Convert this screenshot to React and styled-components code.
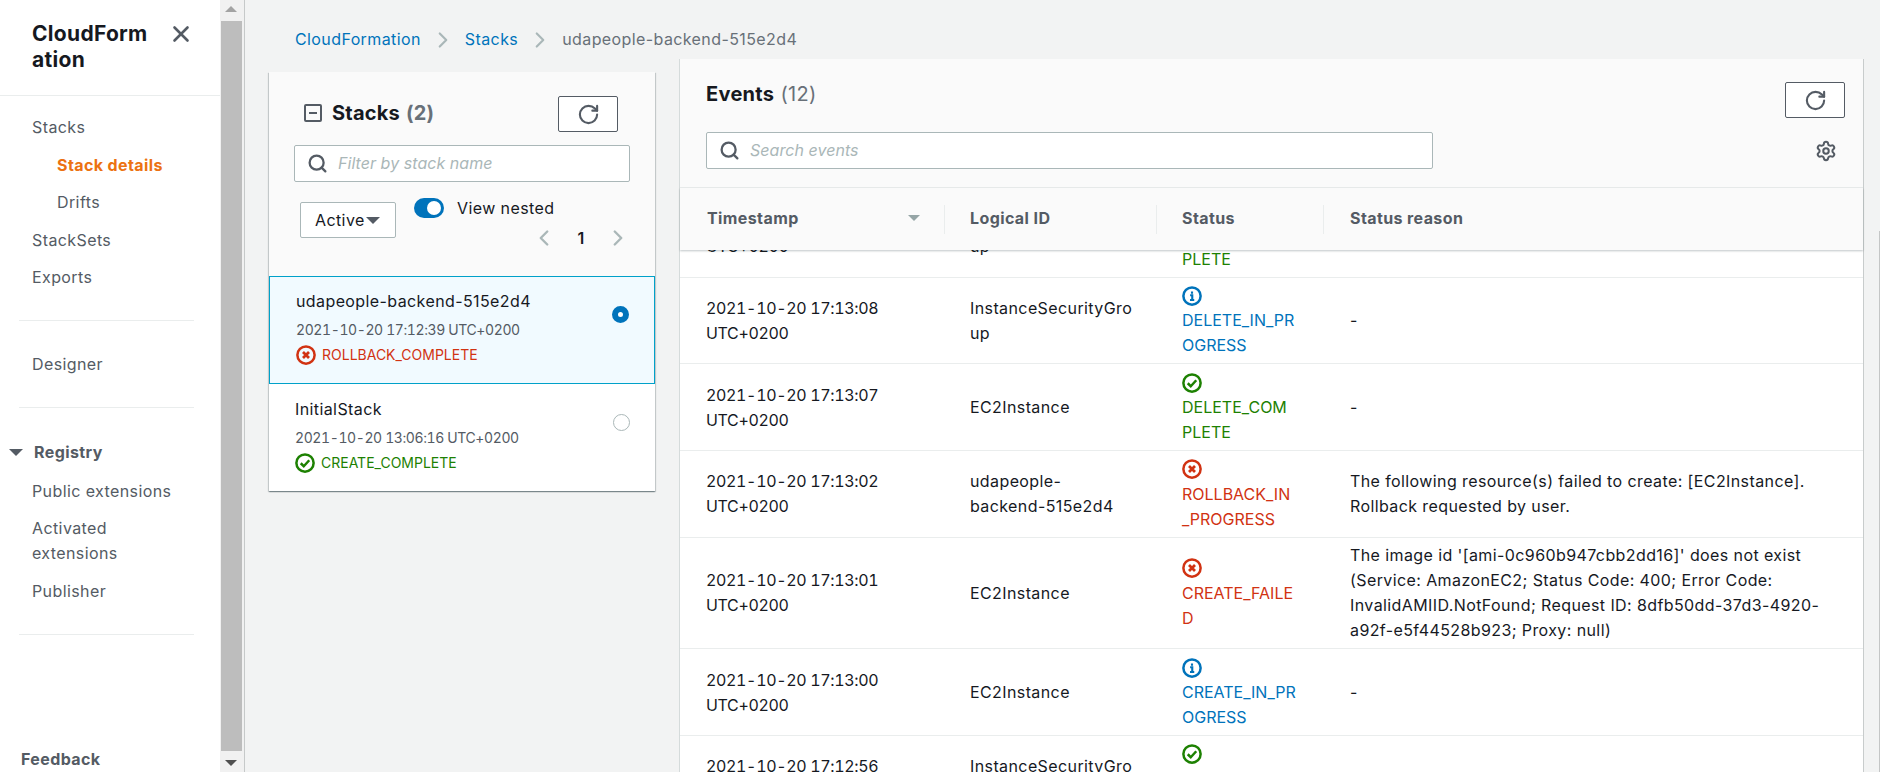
import React from 'react';
import styled, { createGlobalStyle } from 'styled-components';
import { RotateCw, Search, Settings, X, ChevronRight, ChevronLeft } from 'lucide-react';

const GlobalStyle = createGlobalStyle`
  html, body { margin: 0; padding: 0; height: 100%; overflow: hidden; }
  body {
    font-family: Inter, "Liberation Sans", sans-serif;
    font-size: 16px;
    line-height: 25px;
    letter-spacing: 0.4px;
    color: #16191f;
  }
  * { box-sizing: border-box; }
`;

const Page = styled.div`
  position: relative;
  display: flex;
  width: 1880px;
  height: 772px;
  overflow: hidden;
  background: #f2f3f3;
  /* edge of the page's own scroll area, sticks out at the far right */
  &::after {
    content: '';
    position: absolute;
    top: 231px;
    right: 0;
    bottom: 0;
    width: 1px;
    background: #c4c6c6;
  }
`;

/* ---------- side navigation ---------- */
const Sidebar = styled.nav`
  width: 220px;
  flex: none;
  background: #fff;
  display: flex;
  flex-direction: column;
  color: #545b64;
`;

const SideHeader = styled.div`
  display: flex;
  justify-content: space-between;
  padding: 21px 26px 23px 32px;
  border-bottom: 1px solid #eaeded;
`;

const SideTitle = styled.div`
  width: 122px;
  font-size: 21px;
  line-height: 25.5px;
  font-weight: 700;
  letter-spacing: 0.3px;
  color: #16191f;
`;

const CloseBtn = styled.span`
  display: flex;
  height: 25px;
  align-items: center;
  color: #545b64;
`;

const NavGroup = styled.div`
  display: flex;
  flex-direction: column;
  gap: 12.5px;
  padding: ${(p) => p.$pad || '30px 0'};
`;

const NavItem = styled.div`
  padding-left: ${(p) => (p.$sub ? '57px' : '32px')};
  font-weight: ${(p) => (p.$active ? 700 : 400)};
  color: ${(p) => (p.$active ? '#ec7211' : '#545b64')};
`;

const Divider = styled.div`
  height: 1px;
  margin: 0 26px 0 19px;
  background: #eaeded;
`;

const RegistryHead = styled.div`
  display: flex;
  align-items: center;
  gap: 11px;
  padding-left: 9px;
  font-weight: 700;
  margin-bottom: 1.5px;
`;

const Caret = styled.span`
  width: 0;
  height: 0;
  border-left: ${(p) => p.$size || 6}px solid transparent;
  border-right: ${(p) => p.$size || 6}px solid transparent;
  border-top: ${(p) => (p.$size || 6) * 1.1}px solid ${(p) => p.$color || '#545b64'};
`;

const Feedback = styled.div`
  margin-top: auto;
  padding: 0 0 0.5px 21px;
  font-weight: 700;
`;

/* ---------- fake browser scrollbar of the nav ---------- */
const ScrollTrack = styled.div`
  width: 24px;
  flex: none;
  display: flex;
  flex-direction: column;
  align-items: center;
  background: #f1f1f1;
  padding-right: 2px;
`;

const ArrowUp = styled.div`
  width: 0;
  height: 0;
  flex: none;
  margin: 6px 0 9px;
  border-left: 6px solid transparent;
  border-right: 6px solid transparent;
  border-bottom: 6px solid #a3a3a3;
`;

const ArrowDown = styled.div`
  width: 0;
  height: 0;
  flex: none;
  margin: 9px 0 6px;
  border-left: 6px solid transparent;
  border-right: 6px solid transparent;
  border-top: 6px solid #505050;
`;

const ScrollThumb = styled.div`
  flex: 1;
  width: 21px;
  background: #bdbdbd;
`;

/* ---------- main ---------- */
const Main = styled.main`
  flex: 1;
  min-width: 0;
  height: 772px;
  border-left: 1px solid #c6c9c9;
  padding: 27px 17px 0 24px;
  display: flex;
  flex-direction: column;
`;

const Breadcrumbs = styled.div`
  display: flex;
  align-items: center;
  height: 25px;
  padding-left: 26px;
  gap: 9px;
`;

const Crumb = styled.span`
  color: ${(p) => (p.$current ? '#687078' : '#0073bb')};
`;

const Columns = styled.div`
  flex: 1;
  min-height: 0;
  display: flex;
  align-items: flex-start;
  gap: 25px;
  margin-top: 7px;
`;

const cardShadow = '0 1px 1px 0 rgba(0,28,36,.3), 1px 1px 1px 0 rgba(0,28,36,.15), -1px 1px 1px 0 rgba(0,28,36,.15)';

const StacksCard = styled.section`
  width: 386px;
  flex: none;
  margin-top: 13px;
  background: #fff;
  box-shadow: ${cardShadow};
`;

const StacksHead = styled.div`
  background: #fafafa;
  height: 204px;
  padding: 24px 25px 0;
`;

const TitleRow = styled.div`
  display: flex;
  align-items: flex-start;
  justify-content: space-between;
  padding: 0 12px 0 10px;
`;

const StacksTitle = styled.h2`
  margin: 2px 0 0;
  display: flex;
  align-items: center;
  gap: 10px;
  font-size: 20px;
  line-height: 30px;
  font-weight: 700;
  letter-spacing: 0.2px;
`;

const Count = styled.span`
  color: #687078;
  font-weight: ${(p) => p.$weight || 700};
  margin-left: ${(p) => (p.$tight ? '1px' : '-4px')};
`;

const IconButton = styled.button`
  width: 60px;
  height: 36px;
  padding: 0;
  flex: none;
  display: flex;
  align-items: center;
  justify-content: center;
  background: #fff;
  border: 1px solid #545b64;
  border-radius: 2px;
  color: #545b64;
`;

const SearchBox = styled.div`
  display: flex;
  align-items: center;
  gap: 10px;
  height: 37px;
  width: ${(p) => p.$width || 336}px;
  padding-left: 12px;
  background: #fff;
  border: 1px solid #aab7b8;
  border-radius: 2px;
  color: #545b64;
`;

const Placeholder = styled.span`
  font-style: italic;
  letter-spacing: 0.05px;
  color: #aab7b8;
`;

const FilterRow = styled.div`
  margin-top: 13px;
`;

const ControlRow = styled.div`
  display: flex;
  align-items: flex-start;
  margin-top: 16px;
  padding-left: 6px;
`;

const ActiveSelect = styled.div`
  width: 96px;
  height: 36px;
  margin-top: 4px;
  display: flex;
  align-items: center;
  gap: 1px;
  padding-left: 14px;
  background: #fff;
  border: 1px solid #aab7b8;
  border-radius: 2px;
`;

const NestedColumn = styled.div`
  flex: 1;
  padding-left: 18px;
  display: flex;
  flex-direction: column;
`;

const ToggleRow = styled.div`
  display: flex;
  align-items: center;
  gap: 13px;
  height: 20px;
  margin-bottom: 7px;
`;

const Toggle = styled.span`
  position: relative;
  width: 30px;
  height: 20px;
  border-radius: 10px;
  background: #0073bb;
  &::after {
    content: '';
    position: absolute;
    top: 3px;
    right: 3px;
    width: 14px;
    height: 14px;
    border-radius: 50%;
    background: #fff;
  }
`;

const Pager = styled.div`
  display: flex;
  align-items: center;
  justify-content: flex-end;
  gap: 18px;
  margin-right: -1px;
  font-weight: 600;
  color: #aab7b8;
`;

const PageNum = styled.span`
  color: #16191f;
  width: 12px;
  text-align: center;
`;

const StackRow = styled.div`
  position: relative;
  height: ${(p) => (p.$selected ? 108 : 107)}px;
  padding: ${(p) => (p.$selected ? '12px 0 0 26px' : '12px 0 0 25px')};
  background: ${(p) => (p.$selected ? '#f1faff' : '#fff')};
  border: 1px solid ${(p) => (p.$selected ? '#00a1c9' : 'transparent')};
`;

const StackName = styled.div`
  line-height: 25px;
`;

const StackDate = styled.div`
  font-size: 14px;
  line-height: 25px;
  font-variant-numeric: tabular-nums;
  letter-spacing: -0.4px;
  color: #545b64;
  margin-top: 3px;
`;

const StackStatus = styled.div`
  display: flex;
  align-items: center;
  gap: 6px;
  font-size: 14px;
  line-height: 25px;
  letter-spacing: 0;
  color: ${(p) => p.$color};
`;

const Radio = styled.span`
  position: absolute;
  top: 29px;
  right: ${(p) => (p.$on ? 25 : 24)}px;
  width: 17px;
  height: 17px;
  border-radius: 50%;
  background: #fff;
  border: ${(p) => (p.$on ? '6px solid #0073bb' : '1.5px solid #aab7b8')};
`;

const EventsCard = styled.section`
  flex: 1;
  min-width: 0;
  height: 713px;
  display: flex;
  flex-direction: column;
  background: #fff;
  box-shadow: -1px 0 0 #d5dbdb, 1px 0 0 #c8cccc;
`;

const EventsHead = styled.div`
  height: 129px;
  flex: none;
  background: #fafafa;
  padding: 23px 18px 0 26px;
  border-bottom: 1px solid #eaeded;
  position: relative;
`;

const EventsTitle = styled.h2`
  margin: 0;
  height: 50px;
  font-size: 20px;
  line-height: 24px;
  font-weight: 700;
  letter-spacing: 0.3px;
`;

const EventsTools = styled.div`
  display: flex;
  justify-content: space-between;
  align-items: flex-start;
`;

const ToolsRight = styled.div`
  position: absolute;
  top: 23px;
  right: 18px;
  display: flex;
  flex-direction: column;
  align-items: flex-end;
  gap: 22px;
  color: #545b64;
`;

const GearWrap = styled.span`
  display: flex;
  margin-right: 8px;
`;

const eventCols = '265px 212px 167px 1fr';

const ColumnHead = styled.div`
  display: grid;
  grid-template-columns: ${eventCols};
  height: 62px;
  flex: none;
  align-items: center;
  background: #fafafa;
  box-shadow: 0 1px 2px rgba(0,28,36,.25);
  position: relative;
  z-index: 1;
`;

const HeadCell = styled.div`
  height: 29px;
  display: flex;
  align-items: center;
  justify-content: space-between;
  padding: 0 24px 2px ${(p) => p.$pad || 25}px;
  border-right: ${(p) => (p.$last ? 'none' : '1px solid #eaeded')};
  font-weight: 700;
  color: #545b64;
`;

const EventsBody = styled.div`
  flex: 1;
  min-height: 0;
  overflow: hidden;
`;

const EventsList = styled.div`
  margin-top: -59px;
`;

const EventRow = styled.div`
  display: grid;
  grid-template-columns: ${eventCols};
  align-items: center;
  padding: 5.83px 0 4.83px;
  border-bottom: 1px solid #eaeded;
`;

const Cell = styled.div`
  padding-left: ${(p) => p.$pad || 25}px;
  padding-right: ${(p) => p.$right || 20}px;
  overflow-wrap: anywhere;
  white-space: pre-line;
`;

const TimeCell = styled(Cell)`
  font-variant-numeric: tabular-nums;
  letter-spacing: -0.35px;
`;

const StatusCell = styled.div`
  padding-left: 25px;
  letter-spacing: 0;
  color: ${(p) => p.$color};
  white-space: pre-line;
`;

const StatusIconLine = styled.div`
  height: 25px;
  display: flex;
  align-items: center;
`;

const RED = '#d13212';
const GREEN = '#1d8102';
const BLUE = '#0073bb';

// status glyphs, same ring with a different mark in it
const StatusIcon = ({ kind, size = 20 }) => {
  const color = kind === 'error' ? RED : kind === 'success' ? GREEN : BLUE;
  return (
    <svg width={size} height={size} viewBox="0 0 16 16" fill="none" style={{ flex: 'none' }}>
      <circle cx="8" cy="8" r="6.9" stroke={color} strokeWidth="2" />
      {kind === 'error' && <path d="M5.6 5.6l4.8 4.8M10.4 5.6l-4.8 4.8" stroke={color} strokeWidth="2.2" />}
      {kind === 'success' && <path d="M4.6 8.2l2.4 2.4 4.4-4.8" stroke={color} strokeWidth="2" />}
      {kind === 'info' && <path d="M6.5 7.4H8.2V11M6.4 11.2h3.4M8 4.3v1.9" stroke={color} strokeWidth="1.7" />}
    </svg>
  );
};

const MinusSquare = () => (
  <svg width="18" height="18" viewBox="0 0 18 18" fill="none">
    <rect x="1" y="1" width="16" height="16" rx="1" stroke="#545b64" strokeWidth="2" />
    <path d="M5 9h8" stroke="#545b64" strokeWidth="2" />
  </svg>
);

const statusColor = { error: RED, success: GREEN, info: BLUE };

const events = [
  { time: '2021-10-20 17:13:09 UTC+0200', id: 'InstanceSecurityGro\nup', kind: 'success', status: 'DELETE_COM\nPLETE', reason: '' },
  { time: '2021-10-20 17:13:08 UTC+0200', id: 'InstanceSecurityGro\nup', kind: 'info', status: 'DELETE_IN_PR\nOGRESS', reason: '-' },
  { time: '2021-10-20 17:13:07 UTC+0200', id: 'EC2Instance', kind: 'success', status: 'DELETE_COM\nPLETE', reason: '-' },
  { time: '2021-10-20 17:13:02 UTC+0200', id: 'udapeople-\nbackend-515e2d4', kind: 'error', status: 'ROLLBACK_IN\n_PROGRESS', reason: 'The following resource(s) failed to create: [EC2Instance]. Rollback requested by user.' },
  { time: '2021-10-20 17:13:01 UTC+0200', id: 'EC2Instance', kind: 'error', status: 'CREATE_FAILE\nD', reason: "The image id '[ami-0c960b947cbb2dd16]' does not exist (Service: AmazonEC2; Status Code: 400; Error Code: InvalidAMIID.NotFound; Request ID: 8dfb50dd-37d3-4920-a92f-e5f44528b923; Proxy: null)" },
  { time: '2021-10-20 17:13:00 UTC+0200', id: 'EC2Instance', kind: 'info', status: 'CREATE_IN_PR\nOGRESS', reason: '-' },
  { time: '2021-10-20 17:12:56 UTC+0200', id: 'InstanceSecurityGro\nup', kind: 'success', status: 'DELETE_COM\nPLETE', reason: '-' },
];

const App = () => {
  return (
    <Page>
      <GlobalStyle />
      <Sidebar>
        <SideHeader>
          <SideTitle>CloudForm<br />ation</SideTitle>
          <CloseBtn><X size={26} strokeWidth={2.4} /></CloseBtn>
        </SideHeader>
        <NavGroup $pad="19px 0 30px">
          <NavItem>Stacks</NavItem>
          <NavItem $sub $active>Stack details</NavItem>
          <NavItem $sub>Drifts</NavItem>
          <NavItem>StackSets</NavItem>
          <NavItem>Exports</NavItem>
        </NavGroup>
        <Divider />
        <NavGroup $pad="30.5px 0">
          <NavItem>Designer</NavItem>
        </NavGroup>
        <Divider />
        <NavGroup $pad="31.5px 0 30px">
          <RegistryHead><Caret $size={7} />Registry</RegistryHead>
          <NavItem>Public extensions</NavItem>
          <NavItem>Activated<br />extensions</NavItem>
          <NavItem>Publisher</NavItem>
        </NavGroup>
        <Divider />
        <Feedback>Feedback</Feedback>
      </Sidebar>

      <ScrollTrack>
        <ArrowUp />
        <ScrollThumb />
        <ArrowDown />
      </ScrollTrack>

      <Main>
        <Breadcrumbs>
          <Crumb>CloudFormation</Crumb>
          <ChevronRight size={26} color="#aab7b8" strokeWidth={2} />
          <Crumb>Stacks</Crumb>
          <ChevronRight size={26} color="#aab7b8" strokeWidth={2} />
          <Crumb $current>udapeople-backend-515e2d4</Crumb>
        </Breadcrumbs>

        <Columns>
          <StacksCard>
            <StacksHead>
              <TitleRow>
                <StacksTitle><MinusSquare />Stacks <Count>(2)</Count></StacksTitle>
                <IconButton><RotateCw size={23} strokeWidth={2.2} /></IconButton>
              </TitleRow>
              <FilterRow>
                <SearchBox>
                  <Search size={21} strokeWidth={2.6} />
                  <Placeholder>Filter by stack name</Placeholder>
                </SearchBox>
              </FilterRow>
              <ControlRow>
                <ActiveSelect>Active<Caret $size={7} /></ActiveSelect>
                <NestedColumn>
                  <ToggleRow><Toggle />View nested</ToggleRow>
                  <Pager>
                    <ChevronLeft size={26} strokeWidth={2.2} />
                    <PageNum>1</PageNum>
                    <ChevronRight size={26} strokeWidth={2.2} />
                  </Pager>
                </NestedColumn>
              </ControlRow>
            </StacksHead>
            <StackRow $selected>
              <StackName>udapeople-backend-515e2d4</StackName>
              <StackDate>2021-10-20 17:12:39 UTC+0200</StackDate>
              <StackStatus $color={RED}><StatusIcon kind="error" />ROLLBACK_COMPLETE</StackStatus>
              <Radio $on />
            </StackRow>
            <StackRow>
              <StackName>InitialStack</StackName>
              <StackDate>2021-10-20 13:06:16 UTC+0200</StackDate>
              <StackStatus $color={GREEN}><StatusIcon kind="success" />CREATE_COMPLETE</StackStatus>
              <Radio />
            </StackRow>
          </StacksCard>

          <EventsCard>
            <EventsHead>
              <EventsTitle>Events <Count $weight={400} $tight>(12)</Count></EventsTitle>
              <EventsTools>
                <SearchBox $width={727}>
                  <Search size={21} strokeWidth={2.6} />
                  <Placeholder>Search events</Placeholder>
                </SearchBox>
              </EventsTools>
              <ToolsRight>
                <IconButton><RotateCw size={23} strokeWidth={2.2} /></IconButton>
                <GearWrap><Settings size={22} strokeWidth={2.2} /></GearWrap>
              </ToolsRight>
            </EventsHead>
            <ColumnHead>
              <HeadCell $pad={27}>Timestamp<Caret $size={6} $color="#95a5a6" /></HeadCell>
              <HeadCell>Logical ID</HeadCell>
              <HeadCell>Status</HeadCell>
              <HeadCell $last $pad={26}>Status reason</HeadCell>
            </ColumnHead>
            <EventsBody>
              <EventsList>
                {events.map((ev) => (
                  <EventRow key={ev.time}>
                    <TimeCell $pad={26} $right={40}>{ev.time}</TimeCell>
                    <Cell $right={10}>{ev.id}</Cell>
                    <StatusCell $color={statusColor[ev.kind]}>
                      <StatusIconLine><StatusIcon kind={ev.kind} /></StatusIconLine>
                      {ev.status}
                    </StatusCell>
                    <Cell $pad={26} $right={38}>{ev.reason}</Cell>
                  </EventRow>
                ))}
              </EventsList>
            </EventsBody>
          </EventsCard>
        </Columns>
      </Main>
    </Page>
  );
};

export default App;
